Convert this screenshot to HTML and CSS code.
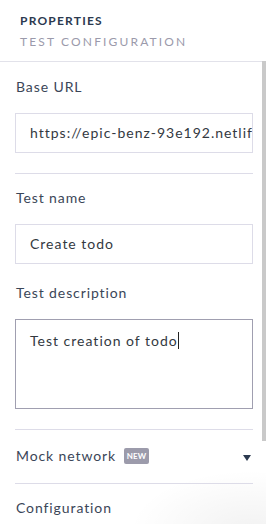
FILE: index.html
```html
<!DOCTYPE html>
<html>
    <head>
        <link rel="stylesheet" href="styles.css">
    </head>
    <body class="back">
        <div class="panel">
            <div class="main">
                <div class="head">
                    <div class="title">PROPERTIES</div>
                    <div class="subtitle">TEST CONFIGURATION</div>
                </div>
                <div class="section first">
                    <div class="label">Base URL</div>
                    <div class="field">https://epic-benz-93e192.netlify.app</div>
                </div>
                <div class="section">
                    <div class="label">Test name</div>
                    <div class="field">Create todo</div>
                    <div class="label desc">Test description</div>
                    <div class="area">Test creation of todo<span class="caret"></span></div>
                </div>
                <div class="section row">
                    <div class="label">Mock network</div>
                    <span class="badge">NEW</span>
                    <span class="arrow"></span>
                </div>
                <div class="section last">
                    <div class="label">Configuration</div>
                </div>
            </div>
            <div class="track">
                <div class="thumb"></div>
            </div>
        </div>
    </body>
</html>
```

FILE: styles.css
```css
body{
    margin: 0;
}

.back{
    background-color: white;
    background-image: radial-gradient(ellipse 120px 60px at 250px 530px, rgba(0,0,0,0.05), rgba(0,0,0,0));
    height: 524px;
    overflow: hidden;
    font-family: Lato, 'Noto Sans', sans-serif;
    color: #3b4658;
}

.panel{
    display: flex;
    width: 266px;
}

.main{
    flex: 1;
    min-width: 0;
}

.head{
    padding: 13px 20px 11px 20px;
    border-bottom: 1px solid #e2e2ea;
}

.title{
    font-size: 12px;
    line-height: 16px;
    font-weight: bold;
    letter-spacing: 1.2px;
    color: #2c3a4f;
}

.subtitle{
    margin-top: 5px;
    font-size: 12px;
    line-height: 16px;
    letter-spacing: 2.15px;
    color: #9b9aab;
}

.section{
    margin: 0 9px 0 15px;
    border-bottom: 1px solid #dddce8;
    padding: 14px 0 20px 0;
}

.section.first{
    padding-top: 15px;
}

.label{
    font-size: 14px;
    line-height: 20px;
    letter-spacing: 0.9px;
    padding-left: 1px;
}

.desc{
    margin-top: 19px;
}

.field{
    margin-top: 16px;
    height: 38px;
    line-height: 38px;
    border: 1px solid #dddce8;
    padding-left: 14px;
    font-size: 14px;
    letter-spacing: 1px;
    color: #33393f;
    white-space: nowrap;
    overflow: hidden;
}

.area{
    margin-top: 16px;
    border: 1px solid #a09fb0;
    padding: 10px 14px 0 14px;
    box-sizing: border-box;
    height: 90px;
    font-size: 14px;
    line-height: 21px;
    letter-spacing: 1px;
    color: #33393f;
}

.caret{
    display: inline-block;
    width: 1px;
    height: 17px;
    background-color: #222;
    vertical-align: -3px;
}

.row{
    display: flex;
    align-items: center;
    padding: 16px 0 17px 0;
}

.badge{
    margin-left: 8px;
    background-color: #9c9bab;
    color: white;
    font-size: 8px;
    font-weight: bold;
    line-height: 16px;
    padding: 0 2.5px;
    border-radius: 2px;
    letter-spacing: 0.2px;
}

.arrow{
    margin-left: auto;
    margin-right: 2px;
    width: 0;
    height: 0;
    border-left: 4px solid transparent;
    border-right: 4px solid transparent;
    border-top: 6px solid #2c3a4f;
    margin-top: 4px;
}

.last{
    border-bottom: none;
}

.track{
    width: 4px;
    padding-top: 61px;
}

.thumb{
    height: 380px;
    background-color: #c9c9c9;
}
```
